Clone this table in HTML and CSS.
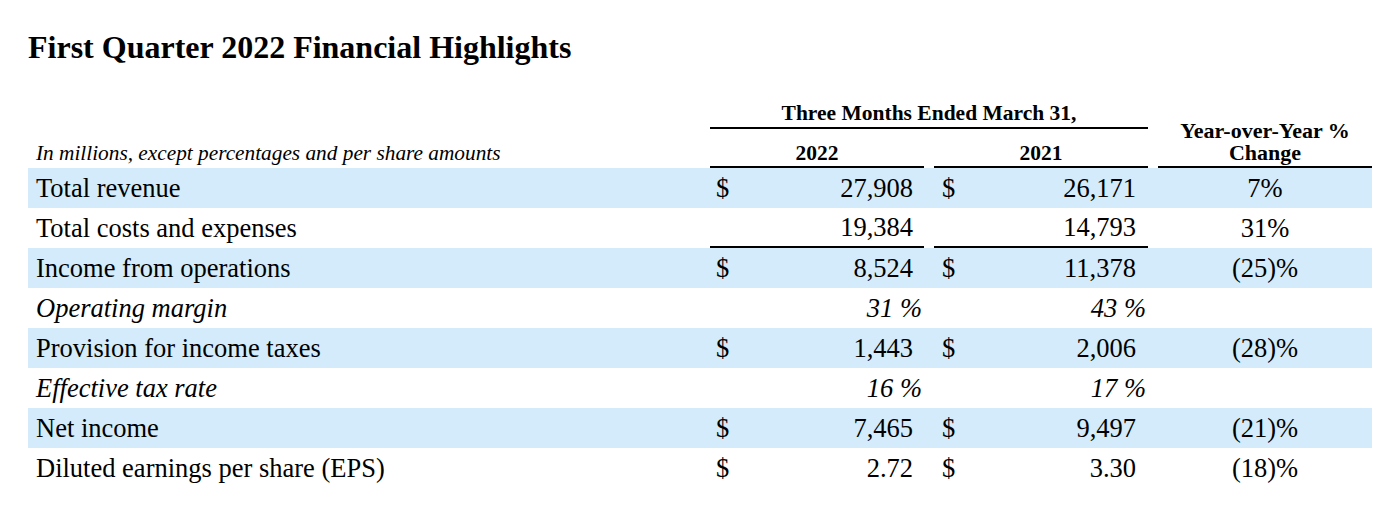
FILE: index.html
```html
<!DOCTYPE html>
<html lang="en">
<head>
<meta charset="utf-8">
<title>First Quarter 2022 Financial Highlights</title>
<link rel="stylesheet" href="styles.css">
</head>
<body>
<main class="page">
  <h1 class="title">First Quarter 2022 Financial Highlights</h1>

  <div class="table">
    <div class="head">
      <div class="head-label">In millions, except percentages and per share amounts</div>
      <div class="head-period">Three Months Ended March 31,</div>
      <div class="head-year y2022">2022</div>
      <div class="head-year y2021">2021</div>
      <div class="head-yoy">Year-over-Year %<br>Change</div>
    </div>

    <div class="row shaded">
      <div class="label">Total revenue</div>
      <div class="money c1"><span>$</span><span>27,908</span></div>
      <div class="money c2"><span>$</span><span>26,171</span></div>
      <div class="yoy">7%</div>
    </div>
    <div class="row">
      <div class="label">Total costs and expenses</div>
      <div class="money c1 ruled"><span></span><span>19,384</span></div>
      <div class="money c2 ruled"><span></span><span>14,793</span></div>
      <div class="yoy">31%</div>
    </div>
    <div class="row shaded">
      <div class="label">Income from operations</div>
      <div class="money c1"><span>$</span><span>8,524</span></div>
      <div class="money c2"><span>$</span><span>11,378</span></div>
      <div class="yoy">(25)%</div>
    </div>
    <div class="row italic">
      <div class="label">Operating margin</div>
      <div class="pct c1">31 %</div>
      <div class="pct c2">43 %</div>
      <div class="yoy"></div>
    </div>
    <div class="row shaded">
      <div class="label">Provision for income taxes</div>
      <div class="money c1"><span>$</span><span>1,443</span></div>
      <div class="money c2"><span>$</span><span>2,006</span></div>
      <div class="yoy">(28)%</div>
    </div>
    <div class="row italic">
      <div class="label">Effective tax rate</div>
      <div class="pct c1">16 %</div>
      <div class="pct c2">17 %</div>
      <div class="yoy"></div>
    </div>
    <div class="row shaded">
      <div class="label">Net income</div>
      <div class="money c1"><span>$</span><span>7,465</span></div>
      <div class="money c2"><span>$</span><span>9,497</span></div>
      <div class="yoy">(21)%</div>
    </div>
    <div class="row">
      <div class="label">Diluted earnings per share (EPS)</div>
      <div class="money c1"><span>$</span><span>2.72</span></div>
      <div class="money c2"><span>$</span><span>3.30</span></div>
      <div class="yoy">(18)%</div>
    </div>
  </div>
</main>
</body>
</html>
```

FILE: styles.css
```css
html, body {
  margin: 0;
  padding: 0;
  background: #ffffff;
}

body {
  font-family: "Liberation Serif", "Times New Roman", serif;
  color: #000000;
}

.page {
  padding: 27px 16px 0 28px;
}

.title {
  margin: 0;
  font-size: 32px;
  line-height: 40px;
  font-weight: 700;
}

.table {
  width: 1344px;
  margin-top: 33px;
}

.head {
  display: grid;
  grid-template-columns: 682px 214px 10px 214px 10px 214px;
  grid-template-rows: auto auto;
  font-size: 21.5px;
}

.head-label {
  grid-column: 1;
  grid-row: 1 / 3;
  align-self: end;
  font-style: italic;
  font-size: 21.3px;
  line-height: 22px;
  padding: 0 0 4px 8px;
}

.head-period {
  grid-column: 2 / 5;
  grid-row: 1;
  font-weight: 700;
  text-align: center;
  line-height: 24px;
  padding: 1px 0 2px;
  border-bottom: 2px solid #000;
}

.head-year {
  grid-row: 2;
  font-weight: 700;
  text-align: center;
  line-height: 22px;
  padding: 13px 0 2px;
  border-bottom: 2px solid #000;
}

.y2022 { grid-column: 2; }
.y2021 { grid-column: 4; }

.head-yoy {
  grid-column: 6;
  grid-row: 1 / 3;
  align-self: end;
  font-weight: 700;
  font-size: 22px;
  text-align: center;
  line-height: 22px;
  padding-bottom: 2px;
  border-bottom: 2px solid #000;
}

.row {
  display: grid;
  grid-template-columns: 682px 214px 10px 214px 10px 214px;
  height: 40px;
  box-sizing: border-box;
  padding-top: 1px;
  font-size: 26.5px;
  line-height: 39px;
}

.row.shaded {
  background: #d3ebfa;
}

.row.italic {
  font-style: italic;
}

.label {
  grid-column: 1;
  padding-left: 8px;
  white-space: nowrap;
}

.c1 { grid-column: 2; }
.c2 { grid-column: 4; }

.money {
  display: flex;
  justify-content: space-between;
}

.money.c1 { padding: 0 11px 0 6px; }
.money.c2 { padding: 0 12px 0 8px; }

.money.ruled {
  box-sizing: border-box;
  line-height: 37px;
  border-bottom: 2px solid #000;
}

.pct {
  text-align: right;
  padding-right: 2px;
}

.yoy {
  grid-column: 6;
  text-align: center;
}
```
